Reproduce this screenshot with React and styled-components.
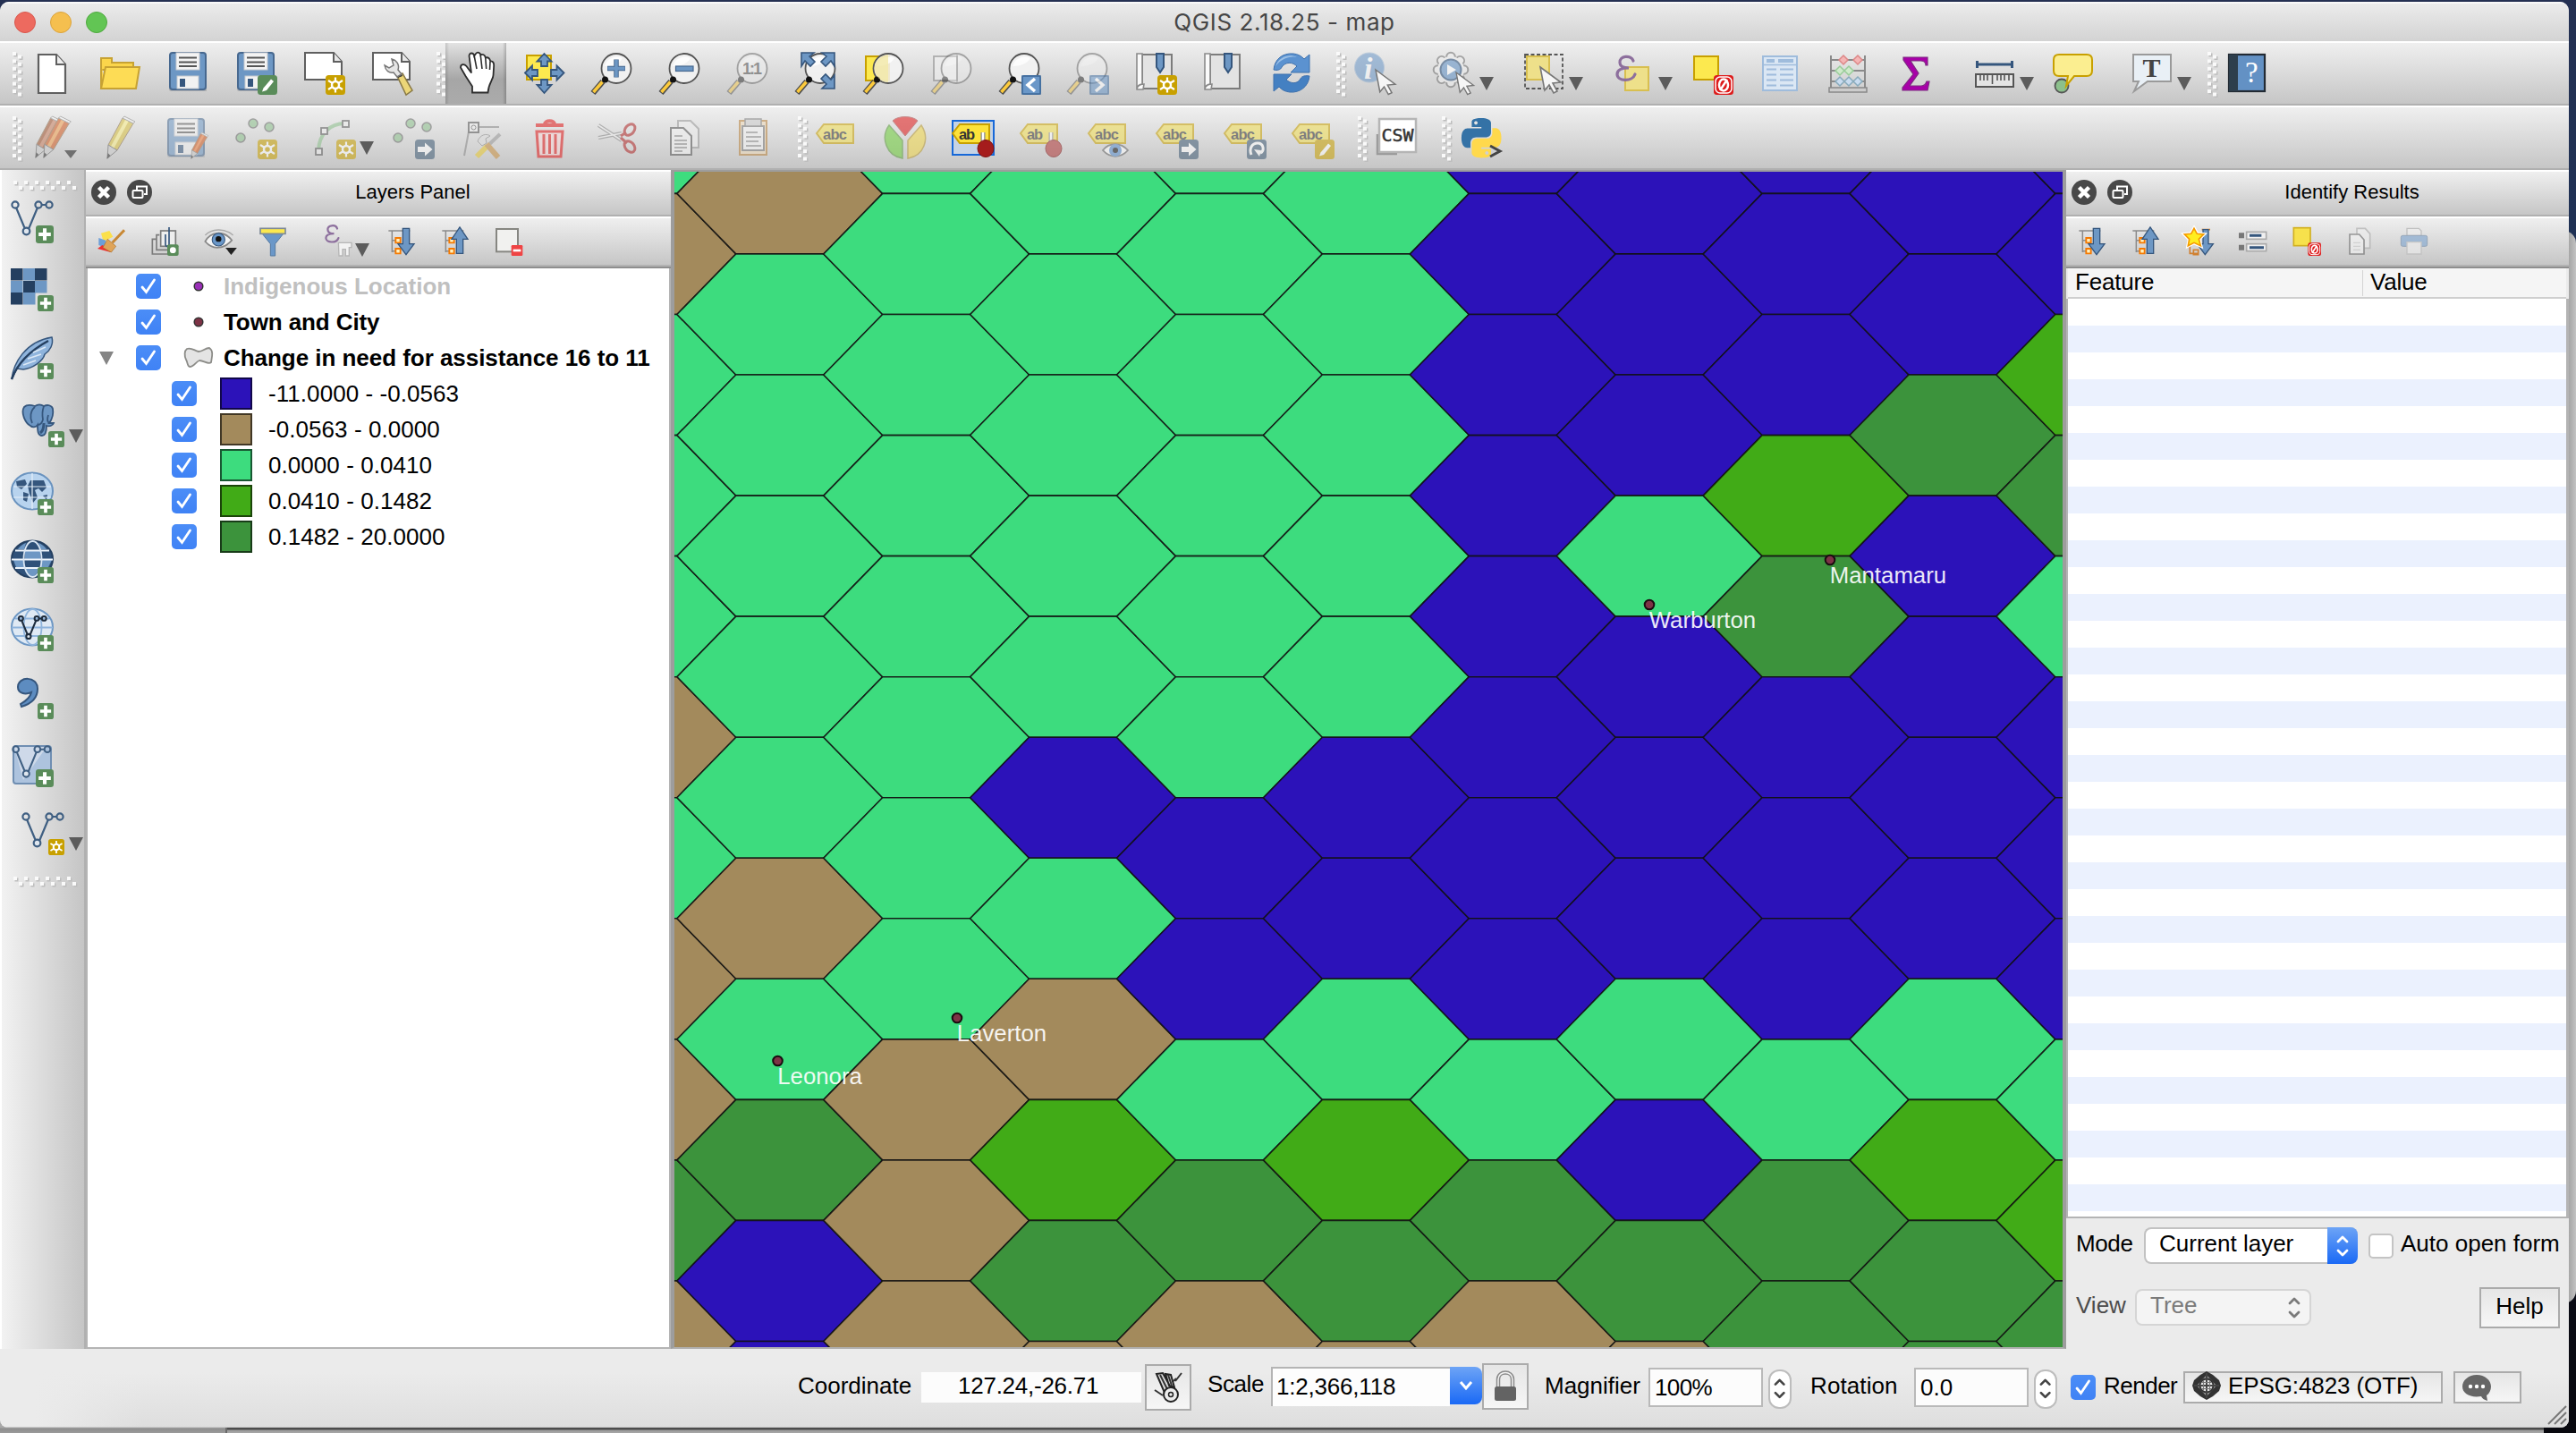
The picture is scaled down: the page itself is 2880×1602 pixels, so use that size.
import React from "react";
import styled, { createGlobalStyle, css } from "styled-components";

const Global = createGlobalStyle`
  html, body { margin: 0; padding: 0; background: #1f2a47; overflow: hidden; }
  * { box-sizing: border-box; }
  svg { display: block; overflow: visible; flex: none; }
`;

const sans = `"Liberation Sans", Arial, Helvetica, sans-serif`;

/* ---------- shell ---------- */
const Desktop = styled.div`
  position: relative;
  width: 2880px;
  height: 1602px;
  overflow: hidden;
  padding-top: 2px;
  background: linear-gradient(180deg, #243052 0, #1f3154 260px, #0a0b14 1480px, #08080e 100%);
  font: 26px/30px ${sans};
  color: #000;
`;
const BackWindow = styled.div`
  position: absolute;
  left: 2400px;
  top: 258px;
  width: 480px;
  height: 1199px;
  background: linear-gradient(90deg, #a8a8a8 98.5%, #c3c3c3);
  border-radius: 0 14px 14px 0;
`;
const BackEdge = styled.div`
  position: absolute;
  left: 0;
  top: 1590px;
  width: 2844px;
  height: 12px;
  background:
    linear-gradient(90deg, #6a6a6a, #6a6a6a) 252px 6px / 2px 6px no-repeat,
    linear-gradient(#a8a8a8 0 6px, #8e8e8e 7px, #9a9a9a) 0 0 / 252px 12px no-repeat,
    linear-gradient(#4c4c4c 0 8px, #9c9c9c 9px, #a6a6a6);
`;
const Window = styled.div`
  position: relative;
  display: flex;
  flex-direction: column;
  width: 2872px;
  height: 1594px;
  border-radius: 10px 10px 9px 9px;
  overflow: hidden;
  background: #ebebeb;
`;
const TitleBar = styled.div`
  display: flex;
  align-items: center;
  position: relative;
  height: 44px;
  padding-left: 16px;
  gap: 16px;
  border-top: 2px solid #f8f8f8;
  background: linear-gradient(#ebebeb, #d3d3d3);
`;
const Light = styled.i`
  width: 24px;
  height: 24px;
  margin-top: -1px;
  border-radius: 50%;
  background: ${(p) => p.$c};
  border: 1px solid ${(p) => p.$b};
`;
const WindowTitle = styled.div`
  flex: 1;
  text-align: center;
  padding-right: 136px;
  margin-top: 0;
  font: 26px/30px Inter, Roboto, sans-serif;
  letter-spacing: 0.6px;
  color: #464646;
`;
const bevel = css`
  border-top: 2px solid #fff;
  border-bottom: 2px solid #b0b0b0;
  background: linear-gradient(#efefef, #c6c6c6) padding-box;
`;
const Bar = styled.div`
  ${bevel}
  display: flex;
  align-items: stretch;
  height: 72px;
  padding-left: 2px;
`;
const Cell = styled.div`
  display: flex;
  align-items: center;
  justify-content: center;
  position: relative;
  flex: none;
  width: ${(p) => (p.$drop ? 100 : 76)}px;
`;
const Pressed = styled(Cell)`
  width: 68px;
  margin: 0 4px;
  background: linear-gradient(90deg, #0002, #0000 6%, #0000 94%, #0003), linear-gradient(#e2e2e2, #a6a6a6 60%, #ababab);
`;
const GripBox = styled.div`
  flex: none;
  display: flex;
  align-items: center;
  width: 18px;
  padding-left: 12px;
`;
const Body = styled.div`
  display: flex;
  height: 1318px;
`;

/* ---------- left toolbar ---------- */
const Side = styled.div`
  display: flex;
  flex-direction: column;
  width: 96px;
  flex: none;
  border-left: 2px solid #fff;
  border-right: 2px solid #b0b0b0;
  background: linear-gradient(90deg, #f2f2f2, #c5c5c5);
`;
const SideGrip = styled.div`
  height: ${(p) => (p.$end ? 38 : 20)}px;
  padding: ${(p) => (p.$end ? 10 : 12)}px 0 0 12px;
`;
const SideCell = styled.div`
  position: relative;
  display: flex;
  align-items: center;
  height: 76px;
  padding-left: ${(p) => (p.$drop ? 22 : 10)}px;
`;

/* ---------- panels ---------- */
const Dock = styled.div`
  display: flex;
  flex-direction: column;
  width: ${(p) => p.$w}px;
  flex: none;
`;
const DockTitle = styled.div`
  display: flex;
  align-items: center;
  height: 52px;
  padding: 0 0 2px 6px;
  gap: 12px;
  ${bevel}
  font-size: 22px;
`;
const DockName = styled.span`
  flex: 1;
  text-align: center;
  padding-right: 9px;
`;
const DockBar = styled.div`
  display: flex;
  align-items: stretch;
  height: 58px;
  border-top: 2px solid #fff;
  border-bottom: 2px solid #8e8e8e;
  background: linear-gradient(#efefef, #c6c6c6 52px, #b2b2b2 52px);
  padding-bottom: 2px;
`;
const MiniCell = styled.div`
  position: relative;
  display: flex;
  align-items: center;
  justify-content: center;
  width: ${(p) => (p.$drop ? 84 : 60)}px;
  padding-right: 2px;
`;
const MiniDrop = styled.div`
  position: absolute;
  right: 7px;
  bottom: 9px;
`;
const Tree = styled.div`
  flex: 1;
  background: #fff;
  border: 2px solid #b4b4b4;
  border-top: 0;
`;
const LayerRow = styled.div`
  display: flex;
  align-items: center;
  height: 40px;
  padding-left: ${(p) => (p.$sub ? 94 : 0)}px;
  font-weight: ${(p) => (p.$sub ? 400 : 700)};
  color: ${(p) => (p.$faded ? "#c0c0c0" : "#000")};
  white-space: nowrap;
`;
const Twisty = styled.div`
  width: 54px;
  padding-left: 12px;
`;
const Check = styled.div`
  display: flex;
  align-items: center;
  justify-content: center;
  width: 28px;
  height: 28px;
  flex: none;
  border-radius: 5px;
  background: ${(p) => (p.$off ? "#fff" : "linear-gradient(#4b8df7, #3f82f5)")};
  border: ${(p) => (p.$off ? "2px solid #c4c4c4" : "0")};
`;
const Symbol = styled.div`
  display: flex;
  align-items: center;
  justify-content: center;
  width: 70px;
  padding-left: 14px;
`;
const Swatch = styled.div`
  width: 36px;
  height: 36px;
  margin: 0 18px 0 26px;
  border: 2px solid #0009;
  background: ${(p) => p.$c} border-box;
`;
const LayerName = styled.span`
  padding-bottom: 1px;
  letter-spacing: ${(p) => p.$ls || 0}px;
`;

/* ---------- map ---------- */
const MapFrame = styled.div`
  flex: none;
  width: 1560px;
  height: 1318px;
  border: solid #9d9d9d;
  border-width: 2px 4px 2px 4px;
  border-bottom-color: #b0b0b0;
  overflow: hidden;
`;

/* ---------- identify ---------- */
const HeaderRow = styled.div`
  display: flex;
  align-items: center;
  height: 34px;
  margin: 0 3px 0 2px;
  background: #f5f5f5;
  border-bottom: 2px solid #cfcfcf;
`;
const HeadCell = styled.div`
  width: ${(p) => p.$w}px;
  padding: 0 0 2px 8px;
  line-height: 27px;
  letter-spacing: -0.2px;
  border-right: ${(p) => (p.$sep ? "1px solid #d4d4d4" : "0")};
`;
const Stripes = styled.div`
  height: 1028px;
  border: solid #b4b4b4;
  border-width: 0 3px 2px 2px;
  background: repeating-linear-gradient(#fff 0 30px, #ebf1fe 30px 60px);
`;
const FormRow = styled.div`
  display: flex;
  align-items: center;
  height: ${(p) => p.$h}px;
  padding: 0 10px 0 11px;
`;
const Label = styled.span`
  white-space: nowrap;
  color: ${(p) => p.$c || "#000"};
  width: ${(p) => (p.$w ? p.$w + "px" : "auto")};
  margin-left: ${(p) => p.$ml || 0}px;
  padding-bottom: ${(p) => p.$pb || 0}px;
  letter-spacing: ${(p) => p.$ls || 0}px;
  flex: none;
`;
const Combo = styled.div`
  display: flex;
  align-items: stretch;
  justify-content: space-between;
  width: ${(p) => p.$w}px;
  height: 41px;
  flex: none;
  line-height: 32px;
  padding-left: 15px;
  border-radius: 8px;
  border: 2px solid ${(p) => (p.$off ? "#d5d5d5" : "#c2c2c2")};
  border-right-width: ${(p) => (p.$off ? 2 : 0)}px;
  background: ${(p) => (p.$off ? "#f4f4f4" : "#fff")};
  color: ${(p) => (p.$off ? "#7a7a7a" : "#000")};
`;
const ComboCap = styled.div`
  display: flex;
  align-items: center;
  justify-content: center;
  width: 34px;
  padding-top: 1px;
  margin: ${(p) => (p.$off ? "0" : "-2px 0")};
  border-radius: 0 8px 8px 0;
  background: ${(p) => (p.$off ? "none" : "linear-gradient(#6da4f6, #1a69f5)")};
`;
const Button = styled.div`
  display: flex;
  align-items: center;
  justify-content: ${(p) => (p.$start ? "flex-start" : "center")};
  flex: none;
  gap: 8px;
  width: ${(p) => p.$w}px;
  height: ${(p) => p.$h}px;
  margin-left: ${(p) => p.$ml || 0}px;
  margin-top: ${(p) => p.$mt || 0}px;
  padding-left: ${(p) => (p.$start ? 8 : 0)}px;
  padding-bottom: ${(p) => p.$pb || 0}px;
  white-space: nowrap;
  letter-spacing: ${(p) => p.$ls || 0}px;
  border: 2px solid #ababab;
  background: linear-gradient(#e6e6e6, #f6f6f6);
`;
const Spacer = styled.div`
  flex: 1;
`;

/* ---------- status bar ---------- */
const Status = styled.div`
  position: relative;
  flex: 1;
  display: flex;
  align-items: center;
  padding: 0 0 2px 892px;
  background: linear-gradient(90deg, #ebebeb 40px, #ebebeb00 160px), linear-gradient(#ebebeb 30%, #dedede);
  border-bottom: 1px solid #c9c9c9;
`;
const Field = styled.div`
  flex: none;
  width: ${(p) => p.$w}px;
  height: ${(p) => p.$h}px;
  margin-left: ${(p) => p.$ml}px;
  padding-left: ${(p) => p.$pl}px;
  line-height: ${(p) => p.$h - 4}px;
  background: #fcfcfc;
  letter-spacing: ${(p) => p.$ls || 0}px;
  border: ${(p) => (p.$line ? "2px solid #b9b9b9" : "0")};
`;
const ScaleBox = styled.div`
  display: flex;
  flex: none;
  align-items: stretch;
  margin: -4px 0 0 8px;
  width: 236px;
  height: 42px;
`;
const ScaleText = styled.div`
  flex: 1;
  height: 44px;
  line-height: 40px;
  padding-left: 4px;
  letter-spacing: -0.2px;
  background: #fdfdfd;
  border: solid #b4b4b4;
  border-width: 2px 0 0 2px;
`;
const ScaleCap = styled.div`
  display: flex;
  align-items: center;
  justify-content: center;
  width: 36px;
  border-radius: 0 8px 8px 0;
  background: linear-gradient(#6da4f6, #1a69f5);
`;
const Spinner = styled.div`
  display: flex;
  align-items: center;
  justify-content: center;
  flex: none;
  width: 26px;
  height: 44px;
  margin: 4px 0 0 6px;
  border: 2px solid #bdbdbd;
  border-radius: 12px;
  background: #fff;
`;
const Resizer = styled.div`
  position: absolute;
  right: 2px;
  bottom: 2px;
`;

/* ---------- drawing helpers ---------- */
const Ic = ({ s = 48, children }) => (
  <svg width={s} height={s} viewBox="0 0 48 48" fill="none">{children}</svg>
);
const Down = ({ w = 16, h = 15, c = "#5c5c5c" }) => (
  <svg width={w} height={h} viewBox="0 0 16 15"><path d="M0 0h16L8 15z" fill={c} /></svg>
);
const Grip = ({ across }) => {
  const n = [0, 1, 2, 3, 4, 5];
  const dot = (x, y, k) => (
    <g key={k}>
      <rect x={x + 1.5} y={y + 1.5} width="4" height="4" fill="#bdbdbd" />
      <rect x={x} y={y} width="4" height="4" fill="#fafafa" />
    </g>
  );
  return across ? (
    <svg width="72" height="14">
      {n.map((i) => dot(1 + i * 12, 0, "a" + i))}
      {n.map((i) => dot(7 + i * 12, 6, "b" + i))}
    </svg>
  ) : (
    <svg width="12" height="48">
      {n.map((i) => dot(0, i * 8.4, "a" + i))}
      {n.map((i) => dot(6, 3.5 + i * 8.4, "b" + i))}
    </svg>
  );
};
const GripCell = () => <GripBox><Grip /></GripBox>;
const Tick = () => (
  <svg width="28" height="28" viewBox="0 0 28 28"><path d="M7 15l4.500 5.500L20.500 7" fill="none" stroke="#fff" strokeWidth="2.800" strokeLinecap="round" /></svg>
);
const UpDown = ({ c, s = 1 }) => (
  <svg width={14 * s} height={26 * s} viewBox="0 0 14 26"><path d="M2 8l5-5 5 5M2 18l5 5 5-5" fill="none" stroke={c} strokeWidth="2.800" strokeLinecap="round" strokeLinejoin="round" /></svg>
);

const Badge = ({ x = 26, y = 26, s = 22, c = "#c8a000", children }) => (
  <g transform={`translate(${x} ${y}) scale(${s / 22})`}>
    <rect width="22" height="22" rx="3.500" fill={c} />
    {children}
  </g>
);
const StarBadge = (p) => (
  <Badge {...p}><path d="M11 2.500v17M3 6l16 10M3 16L19 6" stroke="#fff" strokeWidth="2.200" /><circle cx="11" cy="11" r="4" stroke="#fff" strokeWidth="2.500" fill="#c8a000" /></Badge>
);
const PlusBadge = ({ s = 18 }) => (
  <Badge x={48 - s} y={48 - s} s={s} c="#5a8c5a"><path d="M11 3.500v15M3.500 11h15" stroke="#fff" strokeWidth="4.500" /></Badge>
);
const ArrowBadge = () => (
  <Badge c="#3f5b75"><path d="M3 8h8V3.500L19.500 11 11 18.500V14H3z" fill="#fff" /></Badge>
);
const NoBadge = () => (
  <Badge c="#dd1c1c"><rect x="2" y="2" width="18" height="18" rx="5" stroke="#fff" strokeWidth="1.500" /><ellipse cx="11" cy="11" rx="5" ry="6.500" stroke="#fff" strokeWidth="2.500" /><path d="M15 5L7 17" stroke="#fff" strokeWidth="2.500" /></Badge>
);
const Floppy = () => (
  <g>
    <path d="M5 2h38a2 2 0 012 2v40H5a2 2 0 01-2-2z" fill="#0002" />
    <rect x="4" y="1" width="40" height="41" rx="3" fill="#6d97c4" stroke="#47688f" strokeWidth="2" />
    <rect x="11" y="1" width="26" height="19" fill="#f4f4f4" stroke="#c9ccd0" strokeWidth="1" />
    <path d="M14 6.500h20M14 11.500h20M14 16h20" stroke="#555" strokeWidth="1.800" />
    <rect x="12" y="27" width="24" height="14" fill="#f2f2f2" stroke="#c3c9d0" /><rect x="15" y="30" width="6" height="9" fill="#35567d" />
  </g>
);
const Sheet = () => (
  <g><path d="M3 1h32l9 10v20H3z" fill="#fff" stroke="#5f5f5f" strokeWidth="2" /><path d="M35 1v10h9" stroke="#5f5f5f" strokeWidth="2" fill="#e8e8e8" /></g>
);
const Glass = ({ children, dim }) => (
  <g opacity={dim ? 0.45 : 1}>
    <path d="M14 33L3 46" stroke="#4a4a4a" strokeWidth="6.500" />
    <path d="M13.500 33.500L3.500 45" stroke="#fcca3c" strokeWidth="3.500" />
    <circle cx="29" cy="18.500" r="16.500" fill="#f4f4f4dd" stroke="#555" strokeWidth="1.800" />
    <path d="M16 16a14 13 0 0120-9c-3 6-12 9-20 9z" fill="#fff" opacity=".8" />
    <circle cx="16.500" cy="31" r="3.500" fill="#111" />
    {children}
  </g>
);
const Cursor = ({ x = 24, y = 18, k = 1 }) => (
  <path transform={`translate(${x} ${y}) scale(${k})`} d="M0 0l23 17-9 1 5 9-4 2-5-9-5 6z" fill="#f6f6f6" stroke="#777" strokeWidth="1.600" />
);
const Chev = ({ right }) => (
  <Badge c="#5d8cbf"><rect x="1" y="1" width="20" height="20" stroke="#3d6797" strokeWidth="1.500" fill="#6a97c8" /><path d={right ? "M7 4l8 7-8 7" : "M15 4l-8 7 8 7"} stroke="#fff" strokeWidth="3.500" /></Badge>
);
const Book = () => (
  <g><path d="M9 3h33v38H9z" fill="#e3e3e3" stroke="#7c7c7c" strokeWidth="2" /><path d="M3 2h6v34c-3 0-6 2-6 6zM3 42c0-5 6-6 8-6l-1 6z" fill="#fafafa" stroke="#8a8a8a" strokeWidth="1.600" /><path d="M25 2h8v15l-4 6-4-6z" fill="#6d97c4" stroke="#35567d" strokeWidth="2" /></g>
);
const Tag = ({ t = "abc", k = "#f3e055" }) => (
  <g>
    <path d="M1 19l8-10h33v21H9z" fill={k} stroke="#c8a000" strokeWidth="2" />
    <text x="8" y="25.500" fontFamily="Liberation Sans" fontWeight="700" fontSize="16.500" fill="#333" textLength={t === "ab" ? 18 : 27}>{t}</text>
  </g>
);
const Eps = ({ x = 0, y = 0, s = 1, w = 3.2 }) => (
  <path transform={`translate(${x} ${y}) scale(${s})`} d="M19 6C17-1 3 0 4 8c0 4 4 6 10 6C5 14 1 17 1 21c0 8 17 9 20 0" stroke="#8d6f9d" strokeWidth={w} fill="none" strokeLinecap="round" />
);
const Pencil = ({ a = "#e07030", b = "#f0a060", x = 0, y = 0, k = 1 }) => (
  <g transform={`translate(${x} ${y}) scale(${k})`}>
    <path d="M20 2l12 6-18 30L4 32z" fill={a} stroke="#8a7050" strokeWidth="1" /><path d="M25 4.500L8.500 35" stroke={b} strokeWidth="4" />
    <path d="M20 2l2-2 12 6-2 2z" fill="#f5f5f5" stroke="#888" /><path d="M4 32l10 6-11 9z" fill="#ccc" stroke="#666" /><path d="M3.500 41l3 3-4 4z" fill="#333" />
  </g>
);
const Vee = ({ c = "#3f5f82", x = 0, y = 0, k = 1, w = 2.2 }) => (
  <g transform={`translate(${x} ${y}) scale(${k})`} stroke={c} strokeWidth={w} fill="none">
    <path d="M6 8l10 24M20 32L30 8M35 5h4" /><circle cx="5" cy="5" r="3.600" /><circle cx="31" cy="5" r="3.600" /><circle cx="43" cy="5" r="3.600" /><circle cx="17.500" cy="34.500" r="3.800" fill="#dfe6ee" />
  </g>
);
const Py = "M14.25.18l.9.2.73.26.59.3.45.32.34.34.25.34.16.33.1.3.04.26.02.2-.01.13V8.5l-.05.63-.13.55-.21.46-.26.38-.3.31-.33.25-.35.19-.35.14-.33.1-.3.07-.26.04-.21.02H8.77l-.69.05-.59.14-.5.22-.41.27-.33.32-.27.35-.2.36-.15.37-.1.35-.07.32-.04.27-.02.21v3.06H3.17l-.21-.03-.28-.07-.32-.12-.35-.18-.36-.26-.36-.36-.35-.46-.32-.59-.28-.73-.21-.88-.14-1.05-.05-1.23.06-1.22.16-1.04.24-.87.32-.71.36-.57.4-.44.42-.33.42-.24.4-.16.36-.1.32-.05.24-.01h.16l.06.01h8.16v-.83H6.18l-.01-2.75-.02-.37.05-.34.11-.31.17-.28.25-.26.31-.23.38-.2.44-.18.51-.15.58-.12.64-.1.71-.06.77-.04.84-.02 1.27.05zm-6.3 1.98l-.23.33-.08.41.08.41.23.34.33.22.41.09.41-.09.33-.22.23-.34.08-.41-.08-.41-.23-.33-.33-.22-.41-.09-.41.09z";
const BLUE = "#6d97c4";
const NAVY = "#35567d";

const I = {
  doc: <Ic><path d="M9 3h20l10 11v32H9z" fill="#fff" stroke="#5f5f5f" strokeWidth="2.200" /><path d="M29 3v11h10" stroke="#5f5f5f" strokeWidth="2" fill="#eee" /></Ic>,
  folder: <Ic><path d="M3 7h12v5h24v8H3z" fill="#fbd54b" stroke="#c7a233" strokeWidth="2" /><path d="M3 12v29h5" fill="#fbd54b" stroke="#c7a233" strokeWidth="2" /><path d="M8 17h38l-4 24H3z" fill="#fddc55" stroke="#c7a233" strokeWidth="2" /></Ic>,
  save: <Ic><Floppy /></Ic>,
  saveAs: <Ic><Floppy /><Badge c="#5a8c5a"><path d="M15 4.500l3 2.500-8 10-5 1.500 1.500-4z" fill="#fff" /></Badge></Ic>,
  composer: <Ic><Sheet /><StarBadge /></Ic>,
  wrench: <Ic><Sheet /><path d="M30 27l6-3 11 19-7 5z" fill="#ecd678" stroke="#8a7a45" strokeWidth="1.500" /><path d="M29 25l5-2 2 4-5 2z" fill="#333" /><path d="M24 8c5 1 9 6 7 12l4 5-5 3-4-5c-5 1-9-2-10-8l5 3 5-3z" fill="#e6e6e6" stroke="#777" strokeWidth="1.500" /></Ic>,
  hand: <Ic><path d="M20 45.500v-7L12.500 27 7 17.500c0-4 4-4.500 6.500-1.500l5.500 7.500L16.500 4.500c0-4 5-4 5.700 0L24 2c2-2.500 5-1 5.300 1.500 2-1.500 5 0 5.500 3 3-1 5 1 5.400 4 3-.5 4 2 4 4.500L43.500 26c0 5-5.500 9-6 19.500z" fill="#fff" stroke="#2c2c2c" strokeWidth="1.800" /><path d="M22.200 4.500L25 19M29.300 4l1.700 15M34.800 7l.9 12M40 11l-.5 9" stroke="#2c2c2c" strokeWidth="1.600" /></Ic>,
  pan: <Ic><rect x="5" y="4" width="27" height="27" fill="#fce94f" stroke="#c8a000" strokeWidth="2" /><path d="M24.500 2l8 8.500H28V16h-7v-5.500h-4.500zM24.500 46l8-9H28v-6h-7v6h-4.500zM3 23.500l8-8V20h6v7h-6v4.500zM46.500 23.500l-8-8V20H32v7h6.500v4.500z" fill={BLUE} stroke={NAVY} strokeWidth="1.800" /></Ic>,
  zin: <Ic><Glass><path d="M29 8.500v20M19 18.500h20" stroke="#47688f" strokeWidth="5.500" /><path d="M29 9v19M19.500 18.500h19" stroke={BLUE} strokeWidth="3.500" /></Glass></Ic>,
  zout: <Ic><Glass><rect x="19.500" y="16" width="19.500" height="5.500" fill={BLUE} stroke="#47688f" strokeWidth="1.200" /></Glass></Ic>,
  znative: <Ic><Glass dim><text x="18" y="25" fontFamily="Liberation Sans" fontWeight="700" fontSize="18" fill="#333" textLength="22">1:1</text></Glass></Ic>,
  zfull: <Ic><Glass /><path d="M8 1h14l-5 4 6 6-5 5-6-6-4 6zM45 1v15l-4-6-6 6-5-5 6-6-5-4zM45 41V26l-4 5-6-6-5 5 6 6-5 5z" fill={BLUE} stroke={NAVY} strokeWidth="1.600" /></Ic>,
  zsel: <Ic><rect x="4" y="5" width="26" height="27" fill="#fce94f" stroke="#c8a000" strokeWidth="2" /><Glass><path d="M13.500 18c1-8 8-14 15.500-15v31c-8 0-15-7-15.500-16z" fill="#f0e6a0" opacity=".75" /></Glass></Ic>,
  zlayer: <Ic><rect x="4" y="5" width="26" height="27" fill="#f0f0f0" stroke="#888" strokeWidth="1.800" opacity=".6" /><Glass dim><path d="M30 3v31" stroke="#aaa" strokeWidth="1.500" /></Glass></Ic>,
  zlast: <Ic><Glass /><Chev /></Ic>,
  znext: <Ic><Glass dim /><g opacity=".55"><Chev right /></g></Ic>,
  bookNew: <Ic><Book /><StarBadge /></Ic>,
  book: <Ic><Book /></Ic>,
  refresh: <Ic><path d="M4 20C5 8 14 1 26 2c5 .5 9 2.500 12 6l6-5v20H23l7-7c-5-5-13-5-17 1-1 3-5 4-9 3z" fill="#5b92d0" stroke="#3d70ad" strokeWidth="1" /><path d="M44 27c-1 12-11 19-22 18-5-.5-9-2.500-12-6l-6 5V25h20l-6 6c5 5 13 5 16-1 1-3 6-4 10-3z" fill="#4480c2" stroke="#3d70ad" strokeWidth="1" /><path d="M6 16C10 5 22 2 30 6c-8-2-18 2-24 10z" fill="#9cc0e6" /></Ic>,
  identify: <Ic><g opacity=".55"><circle cx="17" cy="17.500" r="16.500" fill="#6a97c8" stroke="#9bb5d2" /><text x="11" y="30" fontFamily="Liberation Serif" fontStyle="italic" fontWeight="700" fontSize="34" fill="#fff">i</text></g><Cursor x={24} y={20} k={0.95} /></Ic>,
  gear: <Ic><g opacity=".6"><g fill="#eee" stroke="#777" strokeWidth="2">{[0, 45, 90, 135, 180, 225, 270, 315].map((a) => <circle key={a} cx="20" cy="5.500" r="4.800" transform={`rotate(${a} 20 20)`} />)}</g><circle cx="20" cy="20" r="15" fill="#eee" /><circle cx="20" cy="20" r="11.500" fill="#6a97c8" stroke={NAVY} strokeWidth="2" /><path d="M16 14l10 6-10 6z" fill="#fff" /></g><Cursor x={26} y={23} k={0.85} /></Ic>,
  select: <Ic><rect x="3" y="3" width="42" height="38" stroke="#555" strokeWidth="1.800" strokeDasharray="4 2.500" /><rect x="5" y="5" width="25" height="26" fill="#eee08a" stroke="#d8bf50" strokeWidth="2" /><Cursor x={20} y={17} /></Ic>,
  expr: <Ic><rect x="15" y="17" width="26" height="26" fill="#eee08a" stroke="#d8bf50" strokeWidth="2" /><Eps x={5} y={4} /></Ic>,
  desel: <Ic><rect x="4" y="5" width="27" height="26" fill="#fce94f" stroke="#c8a000" strokeWidth="2" /><NoBadge /></Ic>,
  table: <Ic><rect x="5" y="5" width="38" height="38" fill="#dbe7f4" stroke="#9fbcdc" strokeWidth="2" /><path d="M5 14.500h38" stroke="#9fbcdc" strokeWidth="1.500" /><path d="M9 10h9M22 10h17" stroke="#9fbcdc" strokeWidth="4" /><path d="M9 19.500h11M24 19.500h15M9 25.500h11M24 25.500h15M9 31.500h11M24 31.500h15M9 37.500h11M24 37.500h15" stroke="#9fbcdc" strokeWidth="2" /></Ic>,
  abacus: <Ic><path d="M5 4v38M43 4v38M5 9h38M5 21h38M5 33h38" stroke="#8a8a8a" strokeWidth="2" /><rect x="3" y="40" width="42" height="5" fill="#ccc" stroke="#888" strokeWidth="1.500" />{[[19, 9, "#f5b5b5", "#d88"], [35, 9, "#f5b5b5", "#d88"], [15, 21, "#cfeacb", "#9c9"], [25, 21, "#cfeacb", "#9c9"], [15, 33, "#c9dcf0", "#8ab"], [25, 33, "#c9dcf0", "#8ab"], [35, 33, "#c9dcf0", "#8ab"]].map((b, i) => <path key={i} d={`M${b[0]} ${b[1] - 5}l5 5-5 5-5-5z`} fill={b[2]} stroke={b[3]} strokeWidth="1.500" />)}</Ic>,
  sigma: <Ic><path d="M10 6h27v9h-2c0-4-2-5-6-5H18l9 14-10 14h13c4 0 5-2 6-5h3l-2 10H9v-3l12-15L10 9z" fill="#a800a8" stroke="#7d2a80" strokeWidth="1.200" /></Ic>,
  ruler: <Ic><path d="M5 14h38M4.500 10v8M43.500 10v8" stroke={NAVY} strokeWidth="3" /><rect x="3" y="25" width="42" height="14" fill="#e4e4e4" stroke="#555" strokeWidth="2" /><path d="M8 26v6M12 26v6M16 26v6M21.500 26v10M27 26v6M31 26v6M35 26v6M40 26v6" stroke="#555" strokeWidth="1.600" /></Ic>,
  tip: <Ic><circle cx="11" cy="38" r="7.500" fill="#8cc08c" stroke="#555" strokeWidth="1.800" /><path d="M8 3h31c4 0 6 2 6 6v12c0 4-2 6-6 6H25l-9 11 2-11H8c-4 0-6-2-6-6V9c0-4 2-6 6-6z" fill="#fbee90" stroke="#c8a000" strokeWidth="2" /></Ic>,
  text: <Ic><path d="M3 3h42v30H19L4 44l5-11H3z" fill="#e9f0f6" stroke="#9a9a9a" strokeWidth="2" /><text x="13.500" y="28" fontFamily="Liberation Serif" fontWeight="700" fontSize="30" fill="#444">T</text></Ic>,
  help: <Ic><rect x="4" y="3" width="40" height="41" fill="#6391c4" stroke="#222a33" strokeWidth="2.200" /><rect x="4" y="3" width="10" height="41" fill="#2d3e4c" /><text x="22" y="34" fontFamily="Liberation Serif" fontSize="33" fill="#fff">?</text></Ic>,

  pencils: <Ic><Pencil x={3} y={0} a="#a0522d" b="#c88060" k={0.98} /><Pencil x={12} y={0} a="#d05a20" b="#f0a050" k={0.98} /><path d="M38 38h14l-7 9z" fill="#222" /></Ic>,
  pencil: <Ic><Pencil x={7} a="#d8c040" b="#fbf08a" /></Ic>,
  saveEdit: <Ic><g transform="translate(-2 2)"><Floppy /></g><Pencil x={26} y={18} k={0.62} a="#d05a20" b="#f08040" /></Ic>,
  addPt: <Ic><g fill="#8cc08c" stroke="#666" strokeWidth="1.500"><circle cx="21" cy="8" r="5" /><circle cx="39" cy="12" r="5" /><circle cx="7" cy="24" r="5" /></g><StarBadge /></Ic>,
  curve: <Ic><path d="M6 38C7 20 18 8 36 8" stroke="#8cc08c" strokeWidth="4" /><g fill="#eee" stroke="#555" strokeWidth="1.800"><rect x="3" y="36" width="7" height="7" /><rect x="9" y="13" width="7" height="7" /><rect x="33" y="5" width="7" height="7" /></g><StarBadge /></Ic>,
  movePt: <Ic><g fill="#8cc08c" stroke="#666" strokeWidth="1.500"><circle cx="21" cy="8" r="5" /><circle cx="39" cy="12" r="5" /><circle cx="7" cy="24" r="5" /></g><ArrowBadge /></Ic>,
  node: <Ic><path d="M11 12L5 44M16 12h28" stroke="#888" strokeWidth="2" /><rect x="10" y="7" width="11" height="11" fill="#eee" stroke="#555" strokeWidth="2" /><circle cx="15.500" cy="12.500" r="2.500" stroke="#555" /><path d="M45 20L28 36" stroke="#999" strokeWidth="4" /><path d="M31 33L19 45" stroke="#e8c830" strokeWidth="6" /><path d="M20 28c3-8 10-9 14-6l-5 3 1 5-5 3z" fill="#ddd" stroke="#888" /><path d="M30 31l13 15" stroke="#c89040" strokeWidth="6" /></Ic>,
  trash: <Ic><path d="M9 10h31M19 9c0-5 11-5 11 0" stroke="#e01818" strokeWidth="4" /><path d="M10 17h29l-2 28H12z" fill="#f8d8d8" stroke="#e01818" strokeWidth="3" /><path d="M18 20v22M24.500 20v22M31 20v22" stroke="#e01818" strokeWidth="3" /></Ic>,
  cut: <Ic><path d="M3 10l26 17M3 24l26-5" stroke="#888" strokeWidth="4" /><path d="M3 10l26 17M3 24l26-5" stroke="#eee" strokeWidth="1.500" /><ellipse cx="38" cy="15" rx="7" ry="5" transform="rotate(-50 38 15)" stroke="#b02828" strokeWidth="3" /><ellipse cx="38" cy="34" rx="7" ry="5" transform="rotate(50 38 34)" stroke="#b02828" strokeWidth="3" /><path d="M28 22l6-4M28 24l7 6" stroke="#b02828" strokeWidth="3" /></Ic>,
  copy: <Ic><path d="M16 5h14l9 9v21H16z" fill="#eee" stroke="#999" strokeWidth="2" /><path d="M8 13h14l9 9v21H8z" fill="#f4f4f4" stroke="#555" strokeWidth="2" /><path d="M12 22h9M12 27h14M12 31h14M12 35h14M12 39h9" stroke="#777" strokeWidth="1.600" /></Ic>,
  paste: <Ic><rect x="9" y="5" width="30" height="38" fill="#eed9b8" stroke="#b8823c" strokeWidth="2" /><path d="M12 11h24v27H12z" fill="#f4f4f4" stroke="#777" strokeWidth="2" /><rect x="15" y="3" width="18" height="8" fill="#ccc" stroke="#777" strokeWidth="1.500" /><path d="M16 18h13M16 23h17M16 28h14M16 33h17" stroke="#777" strokeWidth="1.600" /></Ic>,
  tag: <Ic><Tag /></Ic>,
  pie: <Ic><path d="M24 22L10 5c6-6 22-6 28 0z" fill="#e01818" stroke="#a44" strokeWidth="1" /><path d="M21 47C3 44-4 24 6 10l15 17z" fill="#6fcf3a" stroke="#5a9a3a" strokeWidth="1.500" /><path d="M27 47c18-3 25-22 15-37L27 27z" fill="#f2d84a" stroke="#b89a30" strokeWidth="1.500" /></Ic>,
  pinned: <Ic><rect x="1" y="5" width="46" height="38" fill="#c6d3e4" stroke="#1668d8" strokeWidth="2" /><Tag t="ab" k="#fce23a" /><path d="M35 18v14" stroke="#888" strokeWidth="5" /><path d="M35 18v14" stroke="#fff" strokeWidth="2.500" /><ellipse cx="38" cy="36" rx="9" ry="9.500" fill="#a51c1c" stroke="#7c1010" /></Ic>,
  pin: <Ic><Tag t="ab" /><path d="M35 18v14" stroke="#888" strokeWidth="5" /><path d="M35 18v14" stroke="#fff" strokeWidth="2.500" /><ellipse cx="38" cy="36" rx="9" ry="9.500" fill="#b03838" stroke="#7c1010" /></Ic>,
  tagEye: <Ic><Tag /><path d="M17 38c7-9 20-9 28 0-8 9-20 9-28 0z" fill="#fff" stroke="#666" strokeWidth="1.800" /><circle cx="31" cy="38" r="7" fill="#5a8fce" /><circle cx="31" cy="38" r="3" fill="#111" /></Ic>,
  tagMove: <Ic><Tag /><ArrowBadge /></Ic>,
  tagTurn: <Ic><Tag /><Badge c="#3f5b75"><path d="M5 17C2 10 6 4 12 4c7 0 8 9 3 11" stroke="#fff" strokeWidth="3" /><path d="M8 11l8 1-2 7z" fill="#fff" /></Badge></Ic>,
  tagEdit: <Ic><Tag /><Badge c="#c8a000"><path d="M15 4.500l3 2.500-8 10-5 1.500 1.500-4z" fill="#fff" /></Badge></Ic>,
  csw: <Ic><path d="M2 20v22h22" stroke="#999" strokeWidth="2.500" /><rect x="4" y="3" width="41" height="37" fill="#fff" stroke="#b5b5b5" strokeWidth="2.500" /><text x="6.500" y="28" fontFamily="DejaVu Sans Mono" fontSize="20" fill="#333" stroke="#333" strokeWidth=".5" textLength="36" lengthAdjust="spacingAndGlyphs">CSW</text></Ic>,
  python: <Ic><g transform="translate(2 2) scale(1.850)"><path d={Py} fill="#3472a6" /><path d={Py} fill="#ffd94c" transform="rotate(180 12 12)" /></g><path d="M34 33l11 6-11 6" stroke="#444" strokeWidth="3" /></Ic>,

  vAdd: <Ic><Vee /><PlusBadge s={20} /></Ic>,
  raster: <Ic>{[[0, 0, 1], [14, 0, 0], [27, 0, 1], [0, 14, 0], [14, 14, 1], [27, 14, 0], [0, 27, 1], [14, 27, 0]].map((q, i) => <rect key={i} x={q[0]} y={q[1]} width="13.500" height="13.500" fill={q[2] ? "#243f60" : BLUE} />)}<PlusBadge /></Ic>,
  feather: <Ic><path d="M1 48C3 30 16 6 46 1c2 8-2 15-8 19-2 8-14 16-24 17L7 36z" fill="#8fb4dc" stroke={NAVY} strokeWidth="1.500" /><path d="M1 48C6 34 18 18 42 5" stroke="#243f60" strokeWidth="2.500" /><path d="M14 32l14-5M19 25l15-5M25 18l14-6" stroke="#dce9f6" strokeWidth="1.500" /><PlusBadge /></Ic>,
  pg: <Ic><path d="M3 3C6 0 12 1 15 2c3-2 7-2 10 0 4-2 9-1 10 3 1 6-1 12-4 16l5 0c-1 3-5 4-8 3 0 6-1 11-5 11-5 0-5-6-5-12-2 3-6 3-8 1C4 21-1 9 3 3z" fill={BLUE} stroke={NAVY} strokeWidth="1.800" /><path d="M12 21c-3-6-2-14 3-18M18 23c3 0 5-2 6-6-1-5-1-9 1-15M31 21c-3-2-2-6-1-9" stroke={NAVY} strokeWidth="1.800" /><path d="M21 32c3-2 4-6 4-11" stroke={NAVY} strokeWidth="3" /><PlusBadge /></Ic>,
  wms: <Ic><ellipse cx="24" cy="21" rx="23" ry="20.500" fill="#b8d3ee" stroke="#6a93bf" strokeWidth="2" /><path d="M6 10l10-2 2 5-6 6-5-3zM14 22l6 2-2 9-4-2zM22 9h15l3 8-5 5-4-4-4 2 3 8-5 6-4-10-2-9zM36 26l5-1-1 6z" fill="#35567d" /><path d="M3 16h42M3 28h42M24 1v40" stroke="#e6f0fa" strokeWidth="1.200" /><PlusBadge /></Ic>,
  globe: <Ic><ellipse cx="24" cy="21" rx="23" ry="20.500" fill="#2f5179" stroke="#243f60" strokeWidth="2" /><path d="M16 12h17v9H16zM3 22h12v8H6zM34 22h12l-4 8h-8zM8 10c3-4 6-6 9-7l-2 7zM40 10c-3-4-6-6-9-7l2 7zM16 31h17c-3 5-6 9-8 10-4-1-8-5-9-10z" fill={BLUE} /><path d="M16 12h17v9H16z" fill={BLUE} /><path d="M16 22h17v8H16z" fill="#2f5179" /><path d="M5 11.500h38M1 21.500h46M5 31h38" stroke="#eef4fb" strokeWidth="2.200" /><ellipse cx="24.500" cy="21" rx="10" ry="20" stroke="#dbe7f4" strokeWidth="1.800" /><PlusBadge /></Ic>,
  wfs: <Ic><ellipse cx="24" cy="21" rx="23" ry="20.500" fill="#dfe9f4" stroke={BLUE} strokeWidth="2" /><path d="M5 11.500h38M1 21.500h46M5 31h38" stroke="#8fb4dc" strokeWidth="1.800" /><ellipse cx="24.500" cy="21" rx="10" ry="20" stroke="#8fb4dc" strokeWidth="1.800" /><Vee c="#1d2b3c" x={8} y={8} k={0.68} w={3} /><PlusBadge /></Ic>,
  comma: <Ic><path d="M8 12C8 0 30-1 30 14c0 11-8 17-18 20l-1-3c7-4 11-8 12-13-7 3-15 1-15-6z" fill="#5d8cc0" stroke={NAVY} strokeWidth="2" /><PlusBadge /></Ic>,
  virt: <Ic><rect x="3" y="2" width="42" height="42" rx="3" fill="#adc3de" stroke="#6f8eb2" strokeWidth="2" /><path d="M4 3h36L14 40z" fill="#dbe3ee" opacity=".7" /><Vee x={1} y={1} k={0.93} /><PlusBadge s={20} /></Ic>,
  vNew: <Ic><Vee /><StarBadge x={30} y={30} s={18} /></Ic>,

  broom: <Ic s={32}><path d="M6 10l14-4 6 10-16 8z" fill="#fbe04a" /><path d="M2 18l12 4-2 12-10-4z" fill="#6d9fd8" /><path d="M0 36l8-6 16 8-2 4z" fill="#ee3030" /><path d="M17 20l14 12-8 10L9 34z" fill="#e0a458" stroke="#a86f28" /><path d="M25 26L45 5" stroke="#c88834" strokeWidth="4.500" /></Ic>,
  group: <Ic s={32}><path d="M8 20H2v25h26M14 13H9v25h22" stroke="#7c7c7c" strokeWidth="2.500" /><rect x="16" y="6" width="25" height="26" fill="#eee" stroke="#7c7c7c" strokeWidth="2.500" /><path d="M24 12v17c0 4 6 4 6 0V0v22" stroke={NAVY} strokeWidth="2.500" /><Badge x={27} y={29} s={19} c="#5a8c5a"><circle cx="11" cy="11" r="6" fill="#fff" /></Badge></Ic>,
  eye: <Ic s={34}><path d="M2 24c8-16 30-18 42-2-12 14-30 16-42 2z" fill="#f4f4f4" stroke="#888" strokeWidth="2.500" /><path d="M2 14C12 4 32 2 46 14" stroke="#aaa" strokeWidth="2" /><circle cx="23" cy="21" r="10" fill="#6a97c8" stroke={NAVY} strokeWidth="1.500" /><circle cx="23" cy="20" r="4.500" fill="#111" /><path d="M34 34h18l-9 11z" fill="#222" /></Ic>,
  filter: <Ic s={32}><path d="M4 8h40L28 28v20h-8V28z" fill="#6a97c8" stroke="#54789f" strokeWidth="1.500" /><rect x="3" y="2" width="42" height="9" fill="#fce94f" stroke="#7e8a98" strokeWidth="2.500" /></Ic>,
  exprF: <Ic s={32}><Eps x={4} y={-4} s={1.050} w={3.2} /><path d="M26 26h22v8h-4v14h-6V37h-5v11h-6z" fill="#f2f2f2" stroke="#b5b5b5" strokeWidth="2" /></Ic>,
  expand: <Ic s={32}><path d="M2 6h36M8 6v36M8 22h8M8 40h8" stroke="#8a8a8a" strokeWidth="2.200" /><path d="M14 18h8v8h-8zM14 36h8v8h-8z" fill="#fff2c0" stroke="#f57900" strokeWidth="2.800" /><path d="M26 2h11v26h8L31.500 46 18 28h8z" fill={BLUE} stroke={NAVY} strokeWidth="2" /></Ic>,
  collapse: <Ic s={32}><path d="M2 6h36M8 6v36M8 22h8M8 40h8" stroke="#8a8a8a" strokeWidth="2.200" /><path d="M14 18h8v8h-8zM14 36h8v8h-8z" fill="#fff2c0" stroke="#f57900" strokeWidth="2.800" /><path d="M26 44h11V20h8L31.500 0 18 20h8z" fill={BLUE} stroke={NAVY} strokeWidth="2" /></Ic>,
  remove: <Ic s={32}><rect x="3" y="3" width="36" height="38" fill="#f1f1ef" stroke="#868681" strokeWidth="3" /><rect x="28" y="30" width="19" height="18" rx="2" fill="#ef4444" /><path d="M31 39h13" stroke="#fff" strokeWidth="4" /></Ic>,
  star: <Ic s={32}><path d="M8 30v14h14M28 4h14M14 38h8v8h-8z" stroke="#d08030" strokeWidth="2.500" /><path d="M30 4h9v24h8L33.500 46 20 28h10z" fill={BLUE} stroke={NAVY} strokeWidth="2" /><path d="M15 2l5 9 11 1-8 8 3 11-11-5-10 5 2-11-8-8 11-1z" fill="#ffee20" stroke="#fff" strokeWidth="6" /><path d="M15 2l5 9 11 1-8 8 3 11-11-5-10 5 2-11-8-8 11-1z" fill="#ffee20" stroke="#f59a00" strokeWidth="2.500" /></Ic>,
  form: <Ic s={32}><path d="M0 14h9M0 34h9" stroke="#777" strokeWidth="9" /><rect x="13" y="8" width="33" height="12" fill="#f0f0f0" stroke="#aaa" strokeWidth="2.500" /><rect x="13" y="28" width="33" height="12" fill="#f0f0f0" stroke="#aaa" strokeWidth="2.500" /><path d="M18 14h20M18 34h24" stroke={NAVY} strokeWidth="4.500" /></Ic>,
  deselS: <Ic s={32}><rect x="2" y="1" width="28" height="30" fill="#f7e14c" stroke="#d2b020" strokeWidth="2.500" /><NoBadge /></Ic>,
  copyS: <Ic s={32}><g opacity=".6"><path d="M18 2h14l8 9v24H18z" fill="#eee" stroke="#aaa" strokeWidth="2.500" /><path d="M6 12h16l8 9v24H6z" fill="#f4f4f4" stroke="#666" strokeWidth="2.500" /><path d="M12 26h12M12 32h12M12 38h12" stroke="#ccc" strokeWidth="2" /></g></Ic>,
  print: <Ic s={32}><g opacity=".6"><path d="M12 14V2h20l4 4v8z" fill="#eee" stroke="#aaa" strokeWidth="2" /><rect x="2" y="14" width="44" height="18" rx="3" fill="#7ba3cf" stroke="#6683a3" strokeWidth="1.500" /><path d="M12 25h24v20H12z" fill="#eee" stroke="#bbb" strokeWidth="2" /></g></Ic>,
};

/* Toolbar contents: "|" is a grip, "-" marks a disabled tool, "+" one with a drop-down. */
const fileTools = ["|", "doc", "folder", "save", "saveAs", "composer", "wrench", "|", "hand", "pan", "zin", "zout", "znative", "zfull", "zsel", "zlayer", "zlast", "znext", "bookNew", "book", "refresh", "|", "identify", "gear+", "select+", "expr+", "desel", "table", "abacus", "sigma", "ruler+", "tip", "text+", "|", "help"];
const editTools = ["|", "pencils-", "pencil-", "saveEdit-", "addPt-", "curve-+", "movePt-", "node-", "trash-", "cut-", "copy-", "paste-", "|", "tag-", "pie-", "pinned", "pin-", "tagEye-", "tagMove-", "tagTurn-", "tagEdit-", "|", "csw", "|", "python"];
const sideTools = ["vAdd", "raster", "feather", "pg+", "wms", "globe", "wfs", "comma", "virt", "vNew+"];

const Dim = styled.div`
  display: flex;
  opacity: ${(p) => (p.$dim ? 0.55 : 1)};
`;
const Drop = styled.div`
  position: absolute;
  right: 6px;
  bottom: 15px;
`;
const SideDrop = styled.div`
  position: absolute;
  right: 1px;
  bottom: 19px;
`;

const Tools = ({ items }) => (
  <Bar>
    {items.map((t, i) => {
      if (t === "|") return <GripCell key={i} />;
      const name = t.replace(/[-+]/g, "");
      if (name === "hand") return <Pressed key={i}>{I.hand}</Pressed>;
      const drop = t.includes("+");
      return (
        <Cell key={i} $drop={drop}>
          <Dim $dim={t.includes("-")}>{I[name]}</Dim>
          {drop && <Drop><Down /></Drop>}
        </Cell>
      );
    })}
  </Bar>
);

const RoundButton = ({ float }) => (
  <svg width="28" height="28" viewBox="0 0 28 28">
    <circle cx="14" cy="14" r="14" fill="#484848" />
    {float
      ? <g fill="none" stroke="#fff" strokeWidth="2"><path d="M11 11V7.500h11V16h-3" /><rect x="6.500" y="12" width="11" height="8" rx="1" /></g>
      : <path d="M8.500 8.500l11 11M19.500 8.500l-11 11" stroke="#fff" strokeWidth="4.500" />}
  </svg>
);

/* ---------- hexagon map ---------- */
const FILL = { B: "#2c12b9", T: "#a38a5c", G: "#3ddc7e", L: "#41ab17", D: "#3c933c" };
const GRID = [
  "GTGGGTGTTDT",
  "TGGGGGTGDBB",
  "GGGGGGGGTTT",
  "GGGGGBGTLDT",
  "GGGGGGBBGDT",
  "GGGGGBBGLDT",
  "BBBBBBBBGDT",
  "BBBGBBBGBDT",
  "BBBLDBBBGDD",
  "BBDBBBBGLDD",
  "BBLDGBBBGLD",
];
const hexes = GRID.flatMap((col, ci) =>
  col.split("").map((k, r) => {
    const cx = 871.8 + 163.9 * (ci - 1);
    const cy = (ci % 2 === 1 ? 216.4 : 148.9) + 135.06 * r;
    const pts = [[-114.9, 0], [-49, -67.53], [49, -67.53], [114.9, 0], [49, 67.53], [-49, 67.53]]
      .map(([x, y]) => `${(cx + x).toFixed(1)},${(cy + y).toFixed(1)}`).join(" ");
    return { pts, fill: FILL[k], id: `${ci}-${r}` };
  })
);
const towns = [["Leonora", 869.5, 1186], ["Laverton", 1070, 1138], ["Warburton", 1844, 676], ["Mantamaru", 2046, 626]];

const HexMap = () => (
  <svg width="1552" height="1314" viewBox="754 192 1552 1314">
    {hexes.map((h) => <polygon key={h.id} points={h.pts} fill={h.fill} stroke="#111" strokeOpacity=".85" strokeWidth="1.600" />)}
    {towns.map(([n, x, y]) => (
      <g key={n}>
        <circle cx={x} cy={y} r="5.300" fill="#7d3346" stroke="#1a0c10" strokeWidth="2" />
        <text x={x - 0.3} y={y + 26.3} fontFamily="Liberation Sans" fontSize="25.800" fill="#fff" fillOpacity=".92">{n}</text>
      </g>
    ))}
  </svg>
);

const classes = [["-11.0000 - -0.0563", FILL.B], ["-0.0563 - 0.0000", FILL.T], ["0.0000 - 0.0410", FILL.G], ["0.0410 - 0.1482", FILL.L], ["0.1482 - 20.0000", FILL.D]];

const Dot = ({ c }) => <svg width="12" height="12"><circle cx="6" cy="6" r="4.800" fill={c} stroke="#333" strokeWidth="1.500" /></svg>;

export default function App() {
  return (
    <Desktop>
      <Global />
      <BackWindow />
      <BackEdge />
      <Window>
        <TitleBar>
          <Light $c="#ed6a5f" $b="#d9574d" />
          <Light $c="#f5bf4f" $b="#dba33c" />
          <Light $c="#62c554" $b="#4fa93f" />
          <WindowTitle>QGIS 2.18.25 - map</WindowTitle>
        </TitleBar>
        <Tools items={fileTools} />
        <Tools items={editTools} />
        <Body>
          <Side>
            <SideGrip><Grip across /></SideGrip>
            {sideTools.map((t) => (
              <SideCell key={t} $drop={t.includes("+")}>
                {I[t.replace("+", "")]}
                {t.includes("+") && <SideDrop><Down /></SideDrop>}
              </SideCell>
            ))}
            <SideGrip $end><Grip across /></SideGrip>
          </Side>
          <Dock $w={654}>
            <DockTitle>
              <RoundButton /><RoundButton float />
              <DockName>Layers Panel</DockName>
            </DockTitle>
            <DockBar>
              <MiniCell>{I.broom}</MiniCell><MiniCell>{I.group}</MiniCell><MiniCell>{I.eye}</MiniCell><MiniCell>{I.filter}</MiniCell>
              <MiniCell $drop>{I.exprF}<MiniDrop><Down /></MiniDrop></MiniCell>
              <MiniCell>{I.expand}</MiniCell><MiniCell>{I.collapse}</MiniCell><MiniCell>{I.remove}</MiniCell>
            </DockBar>
            <Tree>
              <LayerRow $faded><Twisty /><Check><Tick /></Check><Symbol><Dot c="#9a2fb8" /></Symbol><LayerName>Indigenous Location</LayerName></LayerRow>
              <LayerRow><Twisty /><Check><Tick /></Check><Symbol><Dot c="#7d3346" /></Symbol><LayerName $ls={-0.1}>Town and City</LayerName></LayerRow>
              <LayerRow>
                <Twisty><Down w={18} c="#858585" /></Twisty><Check><Tick /></Check>
                <Symbol><svg width="32" height="24" viewBox="0 0 32 24"><path d="M3 2c5-2 8 2 13 3 5 0 7-4 12-4 5 3 3 10 2 16-3 3-8-2-13-2-4 1-6 7-11 7-3-1-2-5-4-8-2-4-2-10 1-12z" fill="#e4e4e4" stroke="#8c8c88" strokeWidth="1.800" /></svg></Symbol>
                <LayerName $ls={-0.04}>Change in need for assistance 16 to 11</LayerName>
              </LayerRow>
              {classes.map(([t, c]) => (
                <LayerRow key={t} $sub><Check><Tick /></Check><Swatch $c={c} /><LayerName $ls={0.06}>{t}</LayerName></LayerRow>
              ))}
            </Tree>
          </Dock>
          <MapFrame><HexMap /></MapFrame>
          <Dock $w={562}>
            <DockTitle>
              <RoundButton /><RoundButton float />
              <DockName>Identify Results</DockName>
            </DockTitle>
            <DockBar>
              {["expand", "collapse", "star", "form", "deselS", "copyS", "print"].map((n) => <MiniCell key={n}>{I[n]}</MiniCell>)}
            </DockBar>
            <HeaderRow><HeadCell $w={330} $sep>Feature</HeadCell><HeadCell $w={200}>Value</HeadCell></HeaderRow>
            <Stripes />
            <FormRow $h={61}>
              <Label $w={76} $pb={6} $ls={-0.4}>Mode</Label>
              <Combo $w={239}>Current layer<ComboCap><UpDown c="#fff" /></ComboCap></Combo>
              <Label $ml={12} />
              <Check $off />
              <Label $ml={8} $pb={6}>Auto open form</Label>
            </FormRow>
            <FormRow $h={77}>
              <Label $w={66} $pb={6} $c="#4c4c4c">View</Label>
              <Combo $off $w={197}>Tree<ComboCap $off><UpDown c="#7a7a7a" /></ComboCap></Combo>
              <Spacer />
              <Button $w={90} $h={46} $pb={4}>Help</Button>
            </FormRow>
          </Dock>
        </Body>
        <Status>
          <Label $w={138} $pb={4}>Coordinate</Label>
          <Field $w={246} $h={34} $ml={0} $pl={41} $ls={-0.25}>127.24,-26.71</Field>
          <Button $w={52} $h={52} $ml={4}>
            <svg width="32" height="36" viewBox="0 0 32 36" fill="none"><path d="M3 3l7-1 10 18-8 4zM13 3l6 1 4 14-6-2z" fill="#ddd" stroke="#222" strokeWidth="2" /><path d="M7 4l9 18M16 4l4 12M31 2l-7 9M1 21l9 6M25 8l-3 3" stroke="#333" strokeWidth="2" /><circle cx="19" cy="26" r="8" fill="#eee" stroke="#222" strokeWidth="2" /><circle cx="19" cy="26" r="2.500" stroke="#222" strokeWidth="1.500" /></svg>
          </Button>
          <Label $w={63} $ml={18} $pb={8} $ls={-0.4}>Scale</Label>
          <ScaleBox>
            <ScaleText>1:2,366,118</ScaleText>
            <ScaleCap><svg width="16" height="10" viewBox="0 0 16 10"><path d="M2 1l6 7 6-7" fill="none" stroke="#fff" strokeWidth="3" /></svg></ScaleCap>
          </ScaleBox>
          <Button $w={52} $h={52} $mt={-2}>
            <svg width="24" height="34" viewBox="0 0 24 34"><path d="M4 18V9c0-10 16-10 16 0v9" fill="none" stroke="#8a8a8a" strokeWidth="4.500" /><path d="M4 18V9c0-10 16-10 16 0v9" fill="none" stroke="#f4f4f4" strokeWidth="1.500" /><rect x="0" y="17" width="24" height="16" rx="2.500" fill="#636363" /></svg>
          </Button>
          <Label $w={116} $ml={18} $pb={4}>Magnifier</Label>
          <Field $line $w={128} $h={44} $ml={0} $pl={5} $ls={-0.6}>100%</Field>
          <Spinner><UpDown c="#444" s={0.95} /></Spinner>
          <Label $w={116} $ml={21} $pb={4} $ls={0.1}>Rotation</Label>
          <Field $line $w={128} $h={44} $ml={0} $pl={5}>0.0</Field>
          <Spinner><UpDown c="#444" s={0.95} /></Spinner>
          <Label $ml={15} />
          <Check><Tick /></Check>
          <Label $w={89} $ml={9} $pb={4} $ls={-0.5}>Render</Label>
          <Button $start $w={290} $h={36} $pb={3} $ls={-0.1}>
            <svg width="32" height="32" viewBox="0 0 32 32" fill="none"><path d="M16 0l7 4 7 6 2 6-2 6-7 6-7 4-7-4-7-6-2-6 2-6 7-6z" fill="#333" /><path d="M16 4L5 16l11 12 11-12z" fill="#999" /><circle cx="16" cy="16" r="7.500" fill="#eee" stroke="#333" strokeWidth="2" /><path d="M16 2v28M2 16h28" stroke="#444" strokeWidth="2" /><path d="M12.500 10v12M19.500 10v12M10 12.500h12M10 19.500h12" stroke="#777" strokeWidth="1.200" /></svg>
            EPSG:4823 (OTF)
          </Button>
          <Button $start $w={76} $h={36} $ml={12}>
            <svg width="34" height="32" viewBox="0 0 34 32"><path d="M16 2c9 0 16 6 16 13 0 4-2 8-5 10l1 6c-4-1-6-3-7-5C9 28 0 23 0 15 0 8 7 2 16 2z" fill="#666" /><circle cx="9" cy="15" r="2.200" fill="#fff" /><circle cx="16" cy="15" r="2.200" fill="#fff" /><circle cx="23" cy="15" r="2.200" fill="#fff" /></svg>
          </Button>
          <Resizer>
            <svg width="22" height="22" viewBox="0 0 22 22"><path d="M1 21L21 1M8 21L21 8M15 21l6-6" stroke="#777" strokeWidth="2" /></svg>
          </Resizer>
        </Status>
      </Window>
    </Desktop>
  );
}
